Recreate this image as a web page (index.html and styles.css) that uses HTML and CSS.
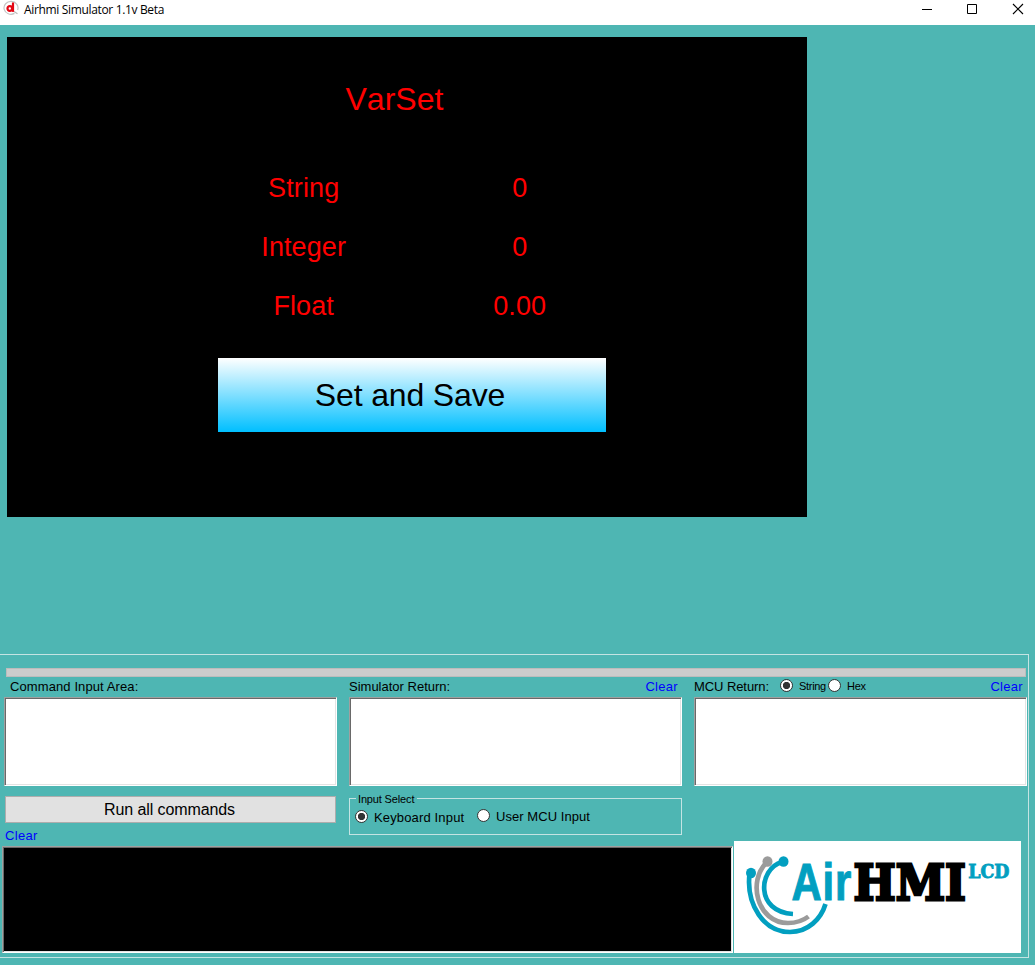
FILE: index.html
```html
<!DOCTYPE html>
<html lang="en">
<head>
<meta charset="utf-8">
<title>Airhmi Simulator 1.1v Beta</title>
<link rel="stylesheet" href="styles.css">
</head>
<body>
<header class="titlebar">
  <svg class="app-icon" width="17" height="16" viewBox="0 0 17 16">
    <path d="M11.500 13.400A7 6.400 0 1 1 14.600 10" fill="none" stroke="#c4c4c4" stroke-width="1.200"/>
    <path d="M11 11.500l3.500 2.300" fill="none" stroke="#b9b9b9" stroke-width="1.200"/>
    <ellipse cx="6.800" cy="8.500" rx="2.300" ry="2.300" fill="none" stroke="#e30613" stroke-width="2.200"/>
    <path d="M10 2.500v9.400" stroke="#e30613" stroke-width="2.200"/>
  </svg>
  <span class="title">Airhmi Simulator 1.1v Beta</span>
  <svg class="window-controls" width="102" height="12" viewBox="0 0 102 12" fill="none" stroke="#000">
    <path d="M0 6.500h10M45.500 1.500h9v9h-9z"/>
    <path d="M91 1l10 10M101 1L91 11" stroke-width="1.150"/>
  </svg>
</header>
<main class="workspace">
  <section class="screen">
    <h1 class="screen-title">VarSet</h1>
    <div class="values">
      <span>String</span><span>0</span>
      <span>Integer</span><span>0</span>
      <span>Float</span><span>0.00</span>
    </div>
    <div class="save">Set and Save</div>
  </section>
  <section class="panel">
    <div class="progress"></div>
    <div class="columns">
      <div class="column">
        <div class="label-row first"><span class="l-command">Command Input Area:</span></div>
        <div class="box"></div>
        <div class="run"><span>Run all commands</span></div>
        <div class="clear bottom-clear">Clear</div>
      </div>
      <div class="column">
        <div class="label-row"><span class="l-sim">Simulator Return:</span><span class="clear">Clear</span></div>
        <div class="box"></div>
        <div class="group">
          <span class="legend">Input Select</span>
          <span class="radio on"></span><span class="keyboard">Keyboard Input</span>
          <span class="radio second"></span><span class="mcu">User MCU Input</span>
        </div>
      </div>
      <div class="column">
        <div class="label-row"><span class="l-mcu">MCU Return:</span>
          <span class="radio on"></span><span class="small string">String</span>
          <span class="radio"></span><span class="small hex">Hex</span>
          <span class="clear">Clear</span></div>
        <div class="box"></div>
      </div>
    </div>
    <div class="footer">
      <div class="console"></div>
      <svg class="logo" width="287" height="112" viewBox="0 0 287 112">
        <g fill="none" stroke="#029fc0" stroke-width="4.700">
          <path d="M15.500 33C12 64 30 91 56 91C74 91 87 78 91.500 63"/>
          <path d="M48 21C24 28 21 71 59 73"/>
        </g>
        <path d="M33 21C13 40 23 82 54 82Q66 82 74.500 75.500" fill="none" stroke="#9b9b9b" stroke-width="4.700"/>
        <ellipse cx="17" cy="32" rx="5" ry="5.300" fill="#029fc0"/>
        <ellipse cx="33.500" cy="20.500" rx="5" ry="5.300" fill="#9b9b9b"/>
        <ellipse cx="49.500" cy="20.500" rx="5" ry="5.300" fill="#029fc0"/>
        <text class="logo-air" transform="translate(57.500 59) scale(0.820 1)">Air</text>
        <text class="logo-hmi" transform="translate(119.500 58.500) scale(0.930 1)">HMI</text>
        <text class="logo-lcd" transform="translate(234.300 36.600) scale(0.940 1)">LCD</text>
      </svg>
    </div>
  </section>
</main>
</body>
</html>
```
FILE: styles.css
```css
* { box-sizing: border-box; }
body {
  margin: 0;
  width: 1035px;
  height: 965px;
  overflow: hidden;
  background: #4eb6b3;
  color: #000;
  font-family: "Liberation Sans", Arial, sans-serif;
  font-size: 13px;
  white-space: nowrap;
}
.titlebar {
  display: flex;
  height: 25px;
  padding-left: 3px;
  background: #fff;
}
.title {
  margin: 2px 0 0 4px;
  font-family: "Open Sans", sans-serif;
  font-size: 12px;
  line-height: 16px;
  letter-spacing: -0.34px;
}
.window-controls { margin: 3px 11px 0 auto; }
.workspace { padding-top: 12px; }
.screen {
  width: 800px;
  height: 480px;
  margin-left: 7px;
  padding-top: 44px;
  background: #000;
  color: #f00;
}
.screen-title {
  margin: 0 0 0 338.5px;
  font-size: 32px;
  font-weight: 400;
  line-height: 37px;
  font-kerning: none;
}
.values {
  display: grid;
  grid-template-columns: 216px 216px;
  grid-auto-rows: 59px;
  margin: 41px 0 0 188.7px;
  font-size: 27px;
  line-height: 59px;
  letter-spacing: 0.1px;
  text-align: center;
}
.save {
  width: 388px;
  height: 74px;
  margin: 22px 0 0 211px;
  padding-right: 4px;
  background: linear-gradient(#fff, #00bfff);
  color: #000;
  font-size: 32px;
  line-height: 74px;
  letter-spacing: -0.15px;
  text-align: center;
}
.panel {
  width: 1030px;
  height: 304px;
  margin: 137px 0 0 -1px;
  padding: 13px 0 0 0;
  border: 1px solid #c4e4e3;
}
.progress {
  width: 1020px;
  height: 9px;
  margin-left: 6px;
  border: 1px solid #bcbcbc;
  background: #ccc;
}
.columns {
  display: grid;
  grid-template-columns: repeat(3, 333px);
  gap: 12px;
  height: 169px;
  margin-left: 4px;
}
.label-row {
  display: flex;
  height: 20px;
  line-height: 19px;
}
.label-row.first { padding-left: 6px; }
.l-command { letter-spacing: 0.1px; }
.clear { color: #00f; letter-spacing: 0.3px; }
.label-row .clear { margin: 0 4px 0 auto; }
.box {
  height: 89px;
  border: 1px solid;
  border-color: #a0a0a0 #fff #fff #a0a0a0;
  background: #fff;
  box-shadow: inset 1px 1px #696969, inset -1px -1px #e3e3e3;
}
.run {
  height: 27px;
  margin: 10px 1px 0;
  padding-right: 2px;
  border: 1px solid #adadad;
  background: #e1e1e1;
  font-size: 16px;
  line-height: 25px;
  letter-spacing: -0.1px;
  text-align: center;
}
.bottom-clear { margin: 5px 0 0 1px; line-height: 15px; }
.radio {
  width: 13px;
  height: 13px;
  border: 1px solid #333;
  border-radius: 50%;
  background: #fff;
}
.radio.on { background: radial-gradient(circle, #333 3.3px, #fff 4px); }
.label-row .radio { margin-top: 2px; }
.l-mcu { width: 86px; letter-spacing: -0.08px; }
.small { font-size: 11px; letter-spacing: -0.3px; }
.string { width: 35px; padding-left: 6px; }
.hex { padding-left: 6px; }
.group {
  position: relative;
  display: flex;
  height: 37px;
  margin-top: 12px;
  padding: 11px 0 0 5px;
  border: 1px solid #c4e4e3;
}
.legend {
  position: absolute;
  top: -7px;
  left: 6px;
  padding: 0 3px 0 2px;
  background: #4eb6b3;
  font-size: 11px;
  line-height: 14px;
  letter-spacing: -0.15px;
}
.keyboard { width: 109px; padding-left: 6px; line-height: 16px; letter-spacing: 0.15px; }
.mcu { padding-left: 6px; line-height: 13px; letter-spacing: 0.05px; }
.group .second { margin-top: -1px; }
.footer {
  display: flex;
  align-items: flex-end;
  height: 107px;
  margin-left: 2px;
}
.console {
  width: 731px;
  height: 107px;
  border: 1px solid;
  border-color: #a0a0a0 #fff #fff #a0a0a0;
  background: #000;
  box-shadow: inset 1px 1px #696969, inset -1px -1px #e3e3e3;
}
.logo { margin-left: 1px; background: #fff; }
.logo-air { fill: #029fc0; font: bold 51px "Liberation Sans", sans-serif; stroke: #029fc0; stroke-width: 1px; letter-spacing: 1px; }
.logo-hmi { font: bold 48px "DejaVu Serif", serif; stroke: #000; stroke-width: 2.8px; }
.logo-lcd { fill: #029fc0; font: bold 18.5px "DejaVu Serif", serif; stroke: #029fc0; stroke-width: 0.9px; }
```
